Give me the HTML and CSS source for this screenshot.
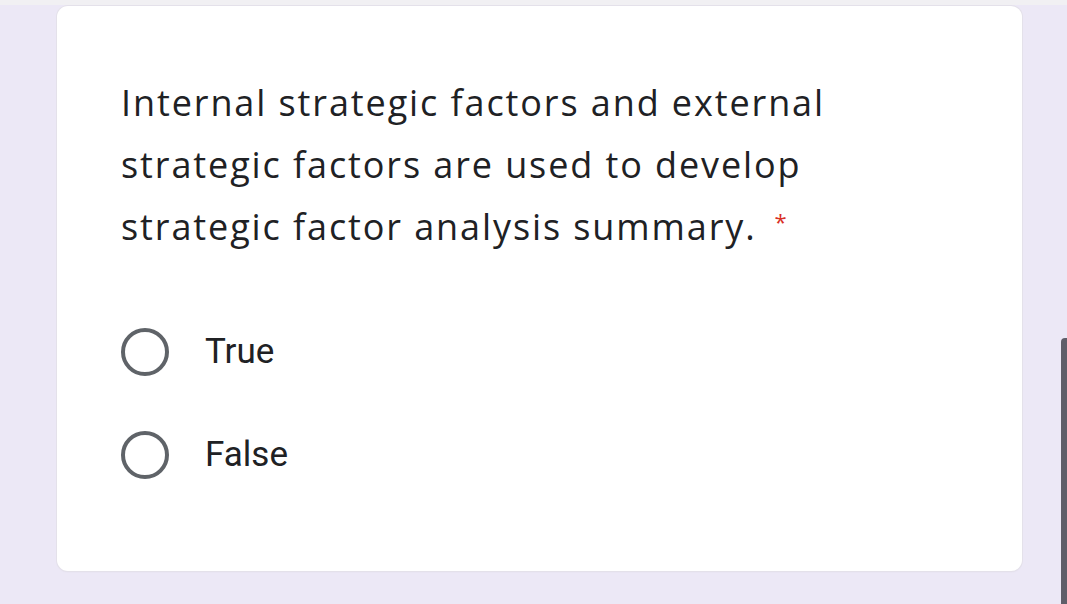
FILE: index.html
```html
<!DOCTYPE html>
<html>
<head>
<meta charset="utf-8">
<link rel="stylesheet" href="styles.css">
</head>
<body>
<div class="topstrip"></div>
<div class="page">
  <div class="card">
    <div class="question">Internal strategic factors and external<br>strategic factors are used to develop<br>strategic factor analysis summary.<span class="req">*</span></div>
    <div class="options">
      <label class="option"><span class="radio"></span><span class="label">True</span></label>
      <label class="option"><span class="radio"></span><span class="label">False</span></label>
    </div>
  </div>
</div>
<div class="scrollbar"></div>
</body>
</html>
```
FILE: styles.css
```css
html, body {
  margin: 0;
  padding: 0;
}
body {
  width: 1067px;
  height: 604px;
  overflow: hidden;
  background: #ece8f6;
  position: relative;
}
.topstrip {
  height: 5px;
  background: #f1f0f3;
}
.page {
  padding: 1px 0 0 57px;
}
.card {
  width: 965px;
  height: 565px;
  box-sizing: border-box;
  background: #ffffff;
  border-radius: 11px;
  box-shadow: 0 0 0 1px #e4e1ea, 0 1px 2px rgba(0,0,0,0.05);
  padding: 66px 0 0 64px;
}
.question {
  font-family: "Open Sans", Roboto, sans-serif;
  font-size: 36px;
  line-height: 62px;
  color: #202124;
  white-space: nowrap;
  letter-spacing: 1.9px;
}
.req {
  display: inline-block;
  color: #d93025;
  font-size: 22px;
  line-height: 22px;
  vertical-align: 10px;
  margin-left: 18px;
  letter-spacing: 0;
}
.options {
  margin-top: 42px;
  display: flex;
  flex-direction: column;
}
.option {
  height: 103px;
  display: flex;
  align-items: center;
  gap: 36px;
}
.radio {
  width: 48px;
  height: 48px;
  box-sizing: border-box;
  border: 4px solid #5f6368;
  border-radius: 50%;
}
.label {
  font-family: Roboto, "Liberation Sans", sans-serif;
  font-size: 35px;
  color: #202124;
}
.scrollbar {
  position: absolute;
  right: 0;
  top: 338px;
  width: 6px;
  height: 266px;
  background: #5f5e69;
  border-top-left-radius: 4px;
}
```
